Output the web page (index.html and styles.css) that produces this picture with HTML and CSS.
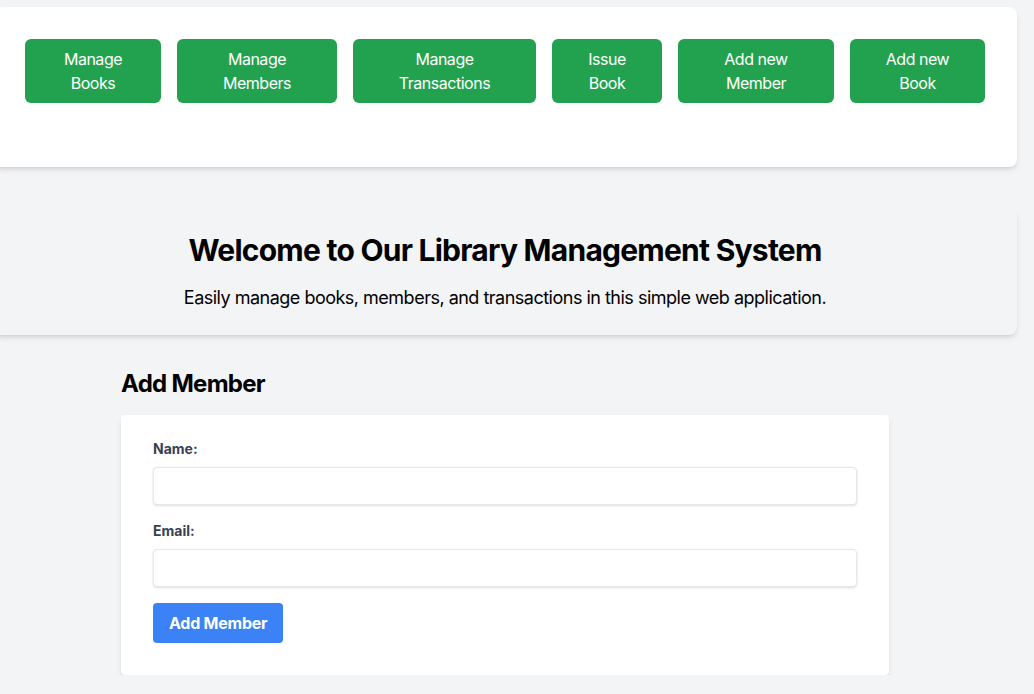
FILE: index.html
```html
<!DOCTYPE html>
<html lang="en">
<head>
<meta charset="utf-8">
<title>Library Management System</title>
<link rel="stylesheet" href="styles.css">
</head>
<body>
<div class="page">
  <nav class="nav-card">
    <div class="nav-row">
      <a class="nav-btn w-books" href="#">Manage Books</a>
      <a class="nav-btn w-members" href="#">Manage Members</a>
      <a class="nav-btn w-trans" href="#">Manage Transactions</a>
      <a class="nav-btn w-issue" href="#">Issue Book</a>
      <a class="nav-btn w-addmember" href="#">Add new Member</a>
      <a class="nav-btn w-addbook" href="#">Add new Book</a>
    </div>
  </nav>

  <section class="hero">
    <h1 class="hero-title">Welcome to Our Library Management System</h1>
    <p class="hero-sub">Easily manage books, members, and transactions in this simple web application.</p>
  </section>

  <main class="main">
    <h2 class="section-title">Add Member</h2>
    <form class="form-card">
      <div class="field">
        <label class="label" for="name">Name:</label>
        <input class="input" id="name" type="text">
      </div>
      <div class="field">
        <label class="label" for="email">Email:</label>
        <input class="input" id="email" type="email">
      </div>
      <button class="submit" type="button">Add Member</button>
    </form>
  </main>
</div>
</body>
</html>
```

FILE: styles.css
```css
* { box-sizing: border-box; }

html, body {
  margin: 0;
  padding: 0;
  background: #f3f4f6;
  font-family: Inter, "Noto Sans", "Liberation Sans", sans-serif;
  color: #000;
}

.page {
  width: 1024px;
  margin-left: -7px;
  padding-top: 7px;
}

.nav-card {
  background: #fff;
  border-radius: 8px;
  box-shadow: 0 4px 6px -1px rgba(0,0,0,0.1), 0 2px 4px -2px rgba(0,0,0,0.1);
  padding: 32px 32px 64px 32px;
}

.nav-row {
  display: flex;
  gap: 16px;
}

.nav-btn {
  display: block;
  flex: 0 0 auto;
  background: #22a24f;
  color: #fff;
  text-decoration: none;
  text-align: center;
  font-size: 16px;
  line-height: 24px;
  letter-spacing: -0.03em;
  padding: 8px 16px;
  border-radius: 6px;
}

.w-books { width: 136px; }
.w-members { width: 160px; }
.w-trans { width: 183px; }
.w-issue { width: 110px; }
.w-addmember { width: 156px; }
.w-addbook { width: 135px; }

.hero {
  margin-top: 40px;
  background: #f3f4f6;
  border-radius: 8px;
  box-shadow: 0 4px 6px -1px rgba(0,0,0,0.1), 0 2px 4px -2px rgba(0,0,0,0.1);
  padding: 25px 24px 23px;
  text-align: center;
}

.hero-title {
  margin: 0 0 16px;
  font-size: 30px;
  line-height: 36px;
  font-weight: 700;
  letter-spacing: -0.025em;
}

.hero-sub {
  margin: 0;
  font-size: 18px;
  line-height: 28px;
  letter-spacing: -0.028em;
}

.main {
  width: 768px;
  margin: 0 auto;
  padding-top: 33px;
}

.section-title {
  margin: 0 0 15px;
  font-size: 24px;
  line-height: 32px;
  font-weight: 700;
  letter-spacing: -0.03em;
}

.form-card {
  background: #fff;
  border-radius: 4px;
  box-shadow: 0 4px 6px -1px rgba(0,0,0,0.1), 0 2px 4px -2px rgba(0,0,0,0.1);
  padding: 24px 32px 32px;
}

.field {
  margin-bottom: 16px;
}

.label {
  display: block;
  color: #374151;
  font-size: 14px;
  line-height: 20px;
  font-weight: 700;
  margin-bottom: 8px;
}

.input {
  display: block;
  width: 100%;
  height: 38px;
  border: 1px solid #e5e7eb;
  border-radius: 4px;
  padding: 8px 12px;
  font-family: inherit;
  font-size: 16px;
  line-height: 20px;
  color: #374151;
  background: #fff;
  box-shadow: 0 1px 3px 0 rgba(0,0,0,0.1), 0 1px 2px -1px rgba(0,0,0,0.1);
  outline: none;
}

.submit {
  display: block;
  background: #3b82f6;
  color: #fff;
  border: 0;
  border-radius: 4px;
  padding: 8px 16px;
  font-family: inherit;
  font-size: 16px;
  line-height: 24px;
  font-weight: 700;
  letter-spacing: -0.015em;
  white-space: nowrap;
}
```
